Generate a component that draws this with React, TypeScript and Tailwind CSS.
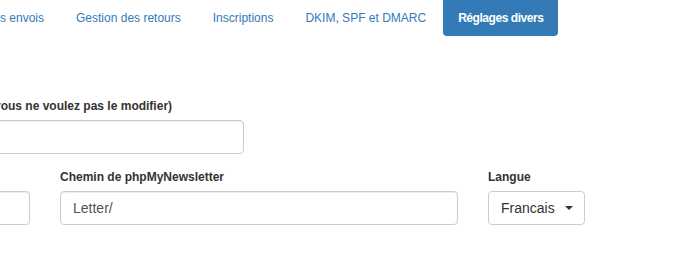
const tabs = ["s envois", "Gestion des retours", "Inscriptions", "DKIM, SPF et DMARC"];

export default function App() {
  return (
    <div className="h-[267px] w-[681px] overflow-hidden bg-white font-['Liberation_Sans',Arial,sans-serif] text-[12px] text-[#333]">
      {/* onglets */}
      <ul className="flex h-[36px] items-stretch">
        {tabs.map((t, i) => (
          <li
            key={t}
            className={
              i === 0
                ? "flex items-center pr-[15px] text-[#337ab7]"
                : "ml-[2px] flex items-center px-[15px] text-[#337ab7]"
            }
          >
            {t}
          </li>
        ))}
        <li className="ml-[2px] flex items-center rounded-b-[4px] bg-[#337ab7] px-[15px] font-bold tracking-[-0.45px] text-white">
          Réglages divers
        </li>
      </ul>

      {/* formulaire */}
      <div className="mt-[62px]">
        <div className="ml-[-6px] w-[250px]">
          <label className="mb-[5px] block whitespace-nowrap font-bold leading-[17px]">
            vous ne voulez pas le modifier)
          </label>
          <div className="h-[34px] w-full rounded-[4px] border border-[#ccc] shadow-[inset_0_1px_1px_rgba(0,0,0,0.075)]" />
        </div>

        <div className="ml-[-100px] mt-[15px] flex gap-[30px]">
          <div className="w-[130px] pt-[22px]">
            <div className="h-[34px] w-full rounded-[4px] border border-[#ccc] shadow-[inset_0_1px_1px_rgba(0,0,0,0.075)]" />
          </div>
          <div className="w-[398px]">
            <label className="mb-[5px] block font-bold leading-[17px]">Chemin de phpMyNewsletter</label>
            <div className="flex h-[34px] w-full items-center rounded-[4px] border border-[#ccc] px-[12px] text-[14px] text-[#555] shadow-[inset_0_1px_1px_rgba(0,0,0,0.075)]">
              Letter/
            </div>
          </div>
          <div>
            <label className="mb-[5px] block font-bold leading-[17px]">Langue</label>
            <div className="flex h-[34px] w-[97px] items-center rounded-[4px] border border-[#ccc] pl-[12px] text-[14px] text-[#333]">
              Francais
              <svg width="8" height="4" viewBox="0 0 8 4" className="ml-[10px]">
                <path d="M0 0h8L4 4z" fill="#333" />
              </svg>
            </div>
          </div>
        </div>
      </div>
    </div>
  );
}
